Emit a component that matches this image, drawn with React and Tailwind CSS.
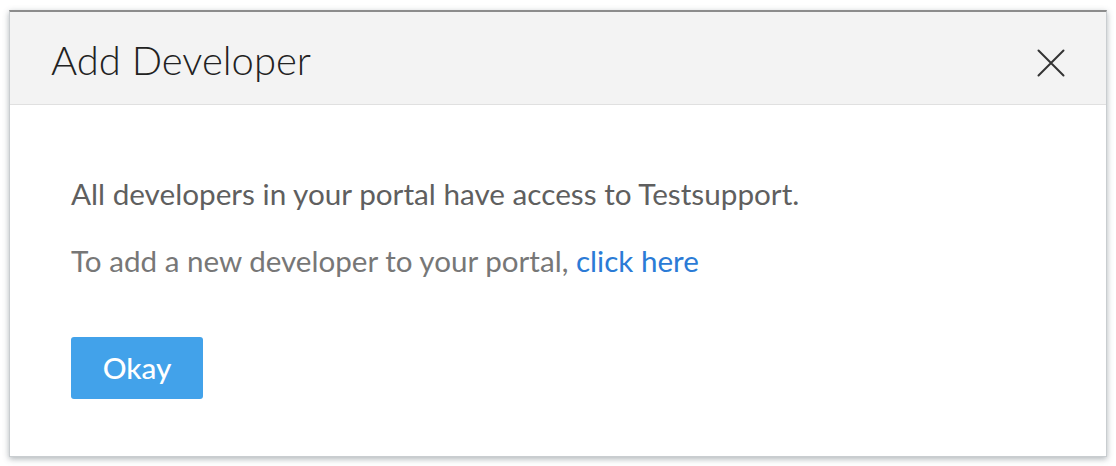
import React from "react";

const CloseIcon = () => (
  <svg width="28" height="28" viewBox="0 0 28 28" fill="none" stroke="#333333" strokeWidth="2" strokeLinecap="round">
    <path d="M1.5 1.5 L26.5 26.5 M26.5 1.5 L1.5 26.5" />
  </svg>
);

const App = () => {
  return (
    <main className="min-h-screen w-full bg-white pt-[10px] pl-[9px]" style={{ fontFamily: "Lato, 'Open Sans', sans-serif" }}>
      <div className="w-[1098px] h-[447px] bg-white border-x border-b border-[#c9cdd0] border-t-2 border-t-[#8c8c8c] shadow-[0_2px_6px_rgba(80,90,100,0.45)] flex flex-col">
        <header className="h-[93px] bg-[#f3f3f3] border-b border-[#e0e0e0] flex items-center justify-between pl-[41px] pr-[41px]">
          <h1 className="text-[40px] font-light text-[#222222] leading-none mt-[3px]">Add Developer</h1>
          <button className="flex items-center justify-center mt-[9px]">
            <CloseIcon />
          </button>
        </header>
        <section className="pl-[61px] pt-[69px]">
          <p className="text-[29.7px] leading-[40px] text-[#5f5f5f]">
            All developers in your portal have access to Testsupport.
          </p>
          <p className="mt-[27px] text-[29.6px] leading-[40px] text-[#777777]">
            To add a new developer to your portal, <a href="#" className="text-[#2b7bd6]">click here</a>
          </p>
          <button className="mt-[56px] w-[132px] h-[62px] rounded-[3px] bg-[#42a2ea] text-white text-[29.7px] font-medium">
            Okay
          </button>
        </section>
      </div>
    </main>
  );
};

export default App;
